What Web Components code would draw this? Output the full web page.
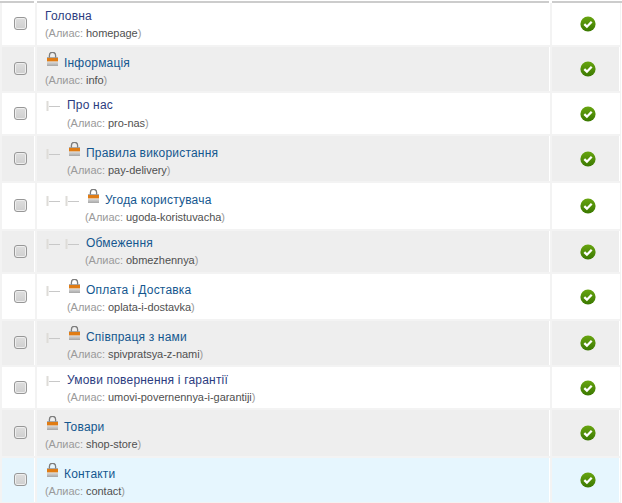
<!DOCTYPE html>
<html><head><meta charset="utf-8"><style>
html,body{margin:0;padding:0;background:#fff;overflow:hidden}
body{font:12px "Liberation Sans",Arial,sans-serif}
</style></head><body>
<template id="row-t"><style>
:host{display:grid;grid-template-columns:32px 512px 67px;column-gap:3px;margin-bottom:2px;--bg:#fff}
:host([alt]){--bg:#eee}
:host([active]){--bg:#e6f6fe}
.c{background:var(--bg);box-shadow:1px 0 0 #fff}
.chk{display:flex;align-items:center;justify-content:center;padding:0 0 1px 4px;box-sizing:border-box}
.box{width:13px;height:13px;box-sizing:border-box;border:1px solid #979797;border-radius:3px;background:linear-gradient(#dedede,#cfcfcf);box-shadow:inset 0 0 0 1px #eee}
.main{padding-left:8px;display:flex;flex-direction:column}
.title{display:flex;align-items:flex-end;height:15px;white-space:nowrap;letter-spacing:.19px}
.gap{flex:none}
a{color:#14578f;text-decoration:none}
:host([visited]) a{color:#2c3c80}
svg.lock{flex:none;margin:0 6px 4px 2px}
svg.t{flex:none;margin:0 5px 1px 0}
.alias{margin-top:4px;font-size:11px;letter-spacing:-.04px;color:#505050;white-space:nowrap}
:host([wide]) .alias{margin-top:5px}
.alias i{font-style:normal;color:#9a9a9a}
.st{display:flex;align-items:center;justify-content:center;padding-left:5px;box-sizing:border-box}
</style>
<div class="c chk"><span class="box"></span></div>
<div class="c main" id="m"><div class="title" id="ti"></div><div class="alias" id="al"></div></div>
<div class="c st"><svg width="16" height="16" viewBox="0 0 16 16"><defs><linearGradient id="g" x1="0" y1="0" x2="0" y2="1"><stop offset="0" stop-color="#68a510"/><stop offset="1" stop-color="#3a7800"/></linearGradient></defs><circle cx="8" cy="8" r="7.6" fill="url(#g)"/><path d="M4.3 8.2 6.9 10.7 11.7 5.7" fill="none" stroke="#fff" stroke-width="2.3"/></svg></div>
</template>
<template id="tbl-t"><style>:host{display:block;margin-top:1px;padding:0 2px;width:621px;box-sizing:border-box;background:linear-gradient(#fff 2px,#f3f3f3 2px);height:520px}
.top{display:grid;grid-template-columns:34px 512px 70px;column-gap:3px;height:2px;margin-left:-2px;margin-right:-1px}
.top div{background:#ccc}
</style><div class="top"><div></div><div></div><div></div></div><slot></slot></template>
<menu-table>
<menu-row visited h="42" p="5" name="Головна" alias="homepage"></menu-row>
<menu-row alt lock h="44" p="8" name="Інформація" alias="info"></menu-row>
<menu-row visited wide h="41" p="4" level="1" name="Про нас" alias="pro-nas"></menu-row>
<menu-row alt h="45" p="9" level="1" lock name="Правила використання" alias="pay-delivery"></menu-row>
<menu-row h="46" p="9" level="2" lock name="Угода користувача" alias="ugoda-koristuvacha"></menu-row>
<menu-row alt h="41" p="4" level="2" name="Обмеження" alias="obmezhennya"></menu-row>
<menu-row h="45" p="8" level="1" lock name="Оплата і Доставка" alias="oplata-i-dostavka"></menu-row>
<menu-row alt h="44" p="8" level="1" lock name="Співпраця з нами" alias="spivpratsya-z-nami"></menu-row>
<menu-row visited h="41" p="5" level="1" name="Умови повернення і гарантії" alias="umovi-povernennya-i-garantiji"></menu-row>
<menu-row alt h="46" p="9" lock name="Товари" alias="shop-store"></menu-row>
<menu-row active h="44" p="8" lock name="Контакти" alias="contact"></menu-row>
</menu-table>
<script>
const tree='<svg class="t" width="14" height="10" viewBox="0 0 14 10"><rect x="0.5" width="2" height="10" fill="#dedcd8"/><rect x="3" y="5" width="11" height="1" fill="#c8c8c8"/></svg>';
const lock='<svg class="lock" width="11" height="14" viewBox="0 0 11 14"><defs><linearGradient id="b" x1="0" y1="0" x2="0" y2="1"><stop offset="0" stop-color="#dcdcdc"/><stop offset="1" stop-color="#a6a6a6"/></linearGradient></defs><path d="M2.4 6V3.4a3.1 3.1 0 0 1 6.2 0V6" fill="none" stroke="#7d7d7d" stroke-width="1.3"/><rect y="5.2" width="11" height="1" fill="#999"/><rect y="6" width="11" height="3.6" fill="#e07c14"/><rect y="9.6" width="11" height="4.4" fill="url(#b)"/></svg>';
class MenuTable extends HTMLElement{constructor(){super();this.attachShadow({mode:'open'}).append(document.getElementById('tbl-t').content.cloneNode(true))}}
class MenuRow extends HTMLElement{constructor(){super();this.attachShadow({mode:'open'}).append(document.getElementById('row-t').content.cloneNode(true))}
connectedCallback(){const s=this.shadowRoot,l=+this.getAttribute('level')||0,k=this.hasAttribute('lock');
this.style.height=this.getAttribute('h')+'px';
s.getElementById('m').style.paddingTop=this.getAttribute('p')+'px';
const trees=l?'<span class="gap" style="width:1px"></span>'+tree.repeat(l)+'<span class="gap" style="width:2px"></span>':'';
s.getElementById('ti').innerHTML=trees+(k?lock:'')+'<a href="#"></a>';
s.querySelector('a').textContent=this.getAttribute('name');
const al=s.getElementById('al');al.innerHTML='<i>(Алиас:</i> <span></span><i>)</i>';
al.querySelector('span').textContent=this.getAttribute('alias');
al.style.paddingLeft=[0,22,40][l]+'px';
}}
customElements.define('menu-table',MenuTable);customElements.define('menu-row',MenuRow);
</script>
</body></html>
